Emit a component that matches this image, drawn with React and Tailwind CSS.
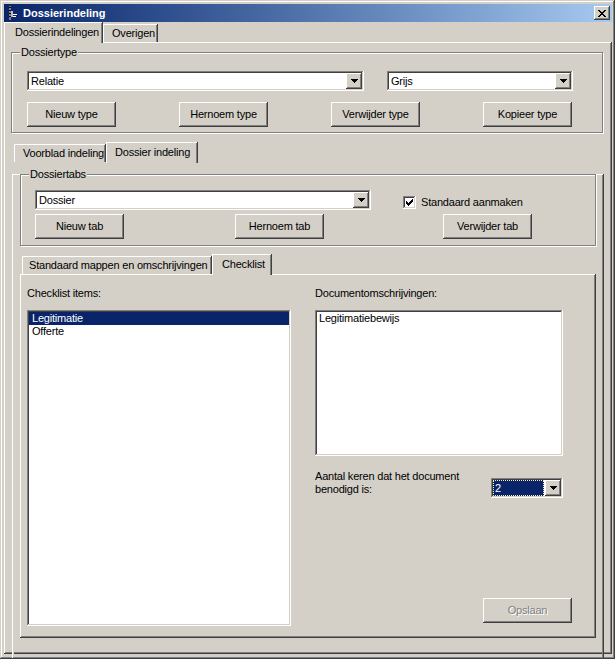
const raised =
  'shadow-[inset_-1px_-1px_#404040,inset_1px_1px_#ffffff,inset_-2px_-2px_#808080,inset_2px_2px_#d4d0c8]'
const sunken =
  'shadow-[inset_-1px_-1px_#ffffff,inset_1px_1px_#808080,inset_-2px_-2px_#d4d0c8,inset_2px_2px_#404040]'
const tabEdge = 'shadow-[inset_-1px_0_#404040,inset_1px_1px_#ffffff,inset_-2px_0_#808080] whitespace-nowrap'

function Btn({ children, disabled }) {
  return (
    <div
      className={`flex h-[25px] w-[89px] items-center justify-center whitespace-nowrap bg-[#d4d0c8] ${raised} ${
        disabled ? 'text-[#808080] [text-shadow:1px_1px_#ffffff]' : ''
      }`}
    >
      {children}
    </div>
  )
}

function DropBtn() {
  return (
    <div className={`flex h-[16px] w-[16px] shrink-0 items-center justify-center bg-[#d4d0c8] ${raised}`}>
      <svg width="7" height="4" viewBox="0 0 7 4" shapeRendering="crispEdges">
        <rect x="0" y="0" width="7" height="1" fill="#000" />
        <rect x="1" y="1" width="5" height="1" fill="#000" />
        <rect x="2" y="2" width="3" height="1" fill="#000" />
        <rect x="3" y="3" width="1" height="1" fill="#000" />
      </svg>
    </div>
  )
}

function Combo({ value, className }) {
  return (
    <div className={`flex h-[20px] bg-white p-[2px] ${sunken} ${className}`}>
      <div className="flex-1 pl-[2px] leading-[16px]">{value}</div>
      <DropBtn />
    </div>
  )
}

function GroupBox({ label, className, children }) {
  return (
    <div className={`relative border border-[#808080] shadow-[inset_1px_1px_#ffffff,1px_1px_#ffffff] ${className}`}>
      <span className="absolute left-[8px] top-[-7px] bg-[#d4d0c8] px-[1px] leading-[13px]">{label}</span>
      {children}
    </div>
  )
}

function Check() {
  return (
    <div className={`flex h-[13px] w-[13px] shrink-0 items-center justify-center bg-white ${sunken}`}>
      <svg width="7" height="7" viewBox="0 0 7 7" shapeRendering="crispEdges" fill="#000">
        <rect x="0" y="2" width="1" height="3" />
        <rect x="1" y="3" width="1" height="3" />
        <rect x="2" y="4" width="1" height="3" />
        <rect x="3" y="3" width="1" height="3" />
        <rect x="4" y="2" width="1" height="3" />
        <rect x="5" y="1" width="1" height="3" />
        <rect x="6" y="0" width="1" height="3" />
      </svg>
    </div>
  )
}

export default function App() {
  return (
    <div
      className={`flex h-[659px] w-[615px] flex-col bg-[#d4d0c8] pb-[5px] pl-[4px] pr-[3px] pt-[4px] text-[11px] leading-[13px] tracking-[-0.2px] text-black shadow-[inset_-1px_-1px_#404040,inset_1px_1px_#d4d0c8,inset_-2px_-2px_#808080,inset_2px_2px_#ffffff] font-['Liberation_Sans',Arial,sans-serif]`}
    >
      {/* Title bar */}
      <div className="flex h-[18px] w-[608px] items-center bg-linear-to-r from-[#0a246a] to-[#a6caf0] pl-[3px] pr-[2px]">
        <svg width="12" height="14" viewBox="0 0 12 14" shapeRendering="crispEdges">
          <rect x="2" y="0" width="2" height="14" fill="#808080" />
          <rect x="2" y="1" width="2" height="1" fill="#000" />
          <rect x="2" y="4" width="2" height="1" fill="#000" />
          <rect x="2" y="7" width="2" height="1" fill="#000" />
          <rect x="2" y="10" width="2" height="1" fill="#000" />
          <rect x="4" y="5" width="2" height="6" fill="#c0c0c0" />
          <rect x="6" y="8" width="4" height="1" fill="#ffffff" />
          <rect x="6" y="10" width="3" height="1" fill="#ffffff" />
        </svg>
        <span className="ml-[4px] font-bold tracking-normal text-white">Dossierindeling</span>
        <div className={`ml-auto flex h-[14px] w-[16px] items-center justify-center bg-[#d4d0c8] ${raised}`}>
          <svg width="8" height="7" viewBox="0 0 8 7" shapeRendering="crispEdges" fill="#000">
            <rect x="0" y="0" width="2" height="1" />
            <rect x="6" y="0" width="2" height="1" />
            <rect x="1" y="1" width="2" height="1" />
            <rect x="5" y="1" width="2" height="1" />
            <rect x="2" y="2" width="4" height="1" />
            <rect x="3" y="3" width="2" height="1" />
            <rect x="2" y="4" width="4" height="1" />
            <rect x="1" y="5" width="2" height="1" />
            <rect x="5" y="5" width="2" height="1" />
            <rect x="0" y="6" width="2" height="1" />
            <rect x="6" y="6" width="2" height="1" />
          </svg>
        </div>
      </div>

      {/* Outer tabs */}
      <div className="relative z-10 flex h-[20px] items-start">
        <div className={`h-[21px] w-[99px] bg-[#d4d0c8] pl-[11px] pt-[4px] ${tabEdge}`}>Dossierindelingen</div>
        <div className={`mt-[2px] h-[18px] w-[55px] pl-[9px] pt-[3px] ${tabEdge}`}>Overigen</div>
      </div>
      <div className={`h-[612px] w-[608px] ${raised}`}>
        <GroupBox label="Dossiertype" className="ml-[7px] mt-[10px] h-[81px] w-[592px] pl-[15px] pt-[18px]">
          <div className="flex gap-[23px]">
            <Combo value="Relatie" className="w-[337px]" />
            <Combo value="Grijs" className="w-[186px]" />
          </div>
          <div className="mt-[11px] flex gap-[63px]">
            <Btn>Nieuw type</Btn>
            <Btn>Hernoem type</Btn>
            <Btn>Verwijder type</Btn>
            <Btn>Kopieer type</Btn>
          </div>
        </GroupBox>

        {/* Dossier tabs */}
        <div className="ml-[8px] mt-[9px]">
          <div className="relative z-10 flex h-[20px] items-start pl-[2px]">
            <div className={`mt-[2px] h-[18px] w-[92px] pl-[9px] pt-[3px] ${tabEdge}`}>Voorblad indeling</div>
            <div className={`h-[21px] w-[92px] bg-[#d4d0c8] pl-[9px] pt-[4px] ${tabEdge}`}>Dossier indeling</div>
          </div>
          <div className={`h-[485px] w-[592px] ${raised}`}>
            <GroupBox label="Dossiertabs" className="ml-[8px] mt-[12px] h-[72px] w-[576px] pl-[14px] pt-[15px]">
              <div className="flex items-start">
                <Combo value="Dossier" className="w-[336px]" />
                <div className="ml-[32px] mt-[6px] flex items-center">
                  <Check />
                  <span className="ml-[5px]">Standaard aanmaken</span>
                </div>
              </div>
              <div className="mt-[4px] flex">
                <Btn>Nieuw tab</Btn>
                <div className="ml-[111px]">
                  <Btn>Hernoem tab</Btn>
                </div>
                <div className="ml-[119px]">
                  <Btn>Verwijder tab</Btn>
                </div>
              </div>
            </GroupBox>

            {/* Inner tabs */}
            <div className="ml-[8px] mt-[8px]">
              <div className="relative z-10 flex h-[20px] items-start pl-[2px]">
                <div className={`mt-[2px] h-[18px] w-[190px] pl-[7px] pt-[3px] ${tabEdge}`}>
                  Standaard mappen en omschrijvingen
                </div>
                <div className={`h-[21px] w-[60px] bg-[#d4d0c8] pl-[10px] pt-[4px] ${tabEdge}`}>Checklist</div>
              </div>
              <div className={`flex h-[364px] w-[576px] pl-[7px] pt-[13px] ${raised}`}>
                <div className="flex w-[264px] flex-col">
                  <div>Checklist items:</div>
                  <div className={`mt-[10px] h-[316px] bg-white p-[2px] ${sunken}`}>
                    <div className="bg-[#0a246a] pl-[3px] text-white">Legitimatie</div>
                    <div className="pl-[3px]">Offerte</div>
                  </div>
                </div>
                <div className="ml-[24px] flex flex-col">
                  <div>Documentomschrijvingen:</div>
                  <div className={`mt-[10px] h-[146px] w-[248px] bg-white p-[2px] pl-[4px] ${sunken}`}>
                    Legitimatiebewijs
                  </div>
                  <div className="mt-[14px] flex items-start">
                    <div className="w-[176px]">
                      Aantal keren dat het document
                      <br />
                      benodigd is:
                    </div>
                    <div className={`mt-[8px] flex h-[20px] w-[72px] bg-white p-[2px] ${sunken}`}>
                      <div className="mr-[1px] flex-1 border border-dotted border-[#f4eeb0] bg-[#0a246a] pl-[1px] leading-[14px] text-white">
                        2
                      </div>
                      <DropBtn />
                    </div>
                  </div>
                  <div className="ml-[168px] mt-[100px]">
                    <Btn disabled>Opslaan</Btn>
                  </div>
                </div>
              </div>
            </div>
          </div>
        </div>
      </div>
    </div>
  )
}
